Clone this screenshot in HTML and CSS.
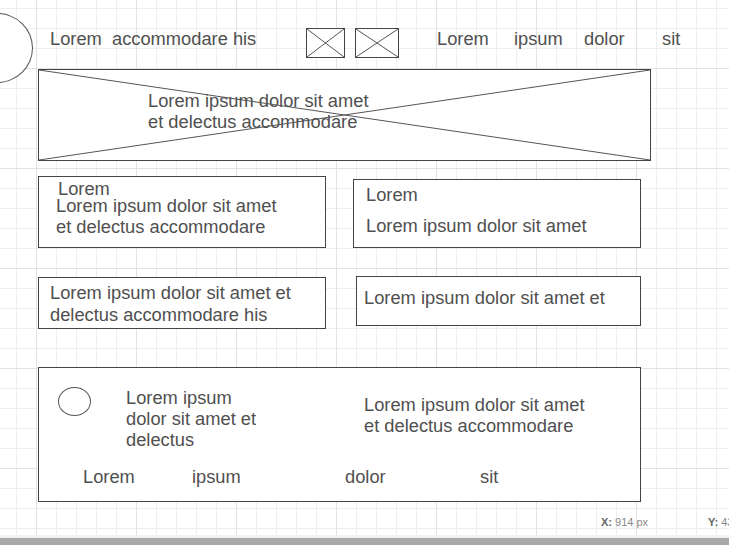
FILE: index.html
```html
<!DOCTYPE html>
<html>
<head>
  <meta charset="UTF-8">
  <title>Wireframe</title>
  <link rel="stylesheet" href="styles.css">
</head>
<body>
  <div class="canvas">
    <header class="topbar">
      <div class="blob"></div>
      <div class="title">Lorem  accommodare his</div>
      <div class="thumbs">
        <div class="thumb thumb-sm">
          <svg viewBox="0 0 100 100" preserveAspectRatio="none"><line x1="0" y1="0" x2="100" y2="100" vector-effect="non-scaling-stroke"/><line x1="0" y1="100" x2="100" y2="0" vector-effect="non-scaling-stroke"/></svg>
        </div>
        <div class="thumb thumb-lg">
          <svg viewBox="0 0 100 100" preserveAspectRatio="none"><line x1="0" y1="0" x2="100" y2="100" vector-effect="non-scaling-stroke"/><line x1="0" y1="100" x2="100" y2="0" vector-effect="non-scaling-stroke"/></svg>
        </div>
      </div>
      <nav class="menu">
        <span>Lorem</span>
        <span>ipsum</span>
        <span>dolor</span>
        <span>sit</span>
      </nav>
    </header>

    <!-- hero placeholder -->
    <section class="hero">
      <p class="hero-text">Lorem ipsum dolor sit amet<br>et delectus accommodare</p>
      <svg class="cross" viewBox="0 0 100 100" preserveAspectRatio="none"><line x1="0" y1="0" x2="100" y2="100" vector-effect="non-scaling-stroke"/><line x1="0" y1="100" x2="100" y2="0" vector-effect="non-scaling-stroke"/></svg>
    </section>

    <div class="row row-a">
      <div class="card card-a">
        <h3>Lorem</h3>
        <p>Lorem ipsum dolor sit amet<br>et delectus accommodare</p>
      </div>
      <div class="card card-b">
        <h3>Lorem</h3>
        <p>Lorem ipsum dolor sit amet</p>
      </div>
    </div>

    <div class="row row-b">
      <div class="card card-c">
        <p>Lorem ipsum dolor sit amet et<br>delectus accommodare his</p>
      </div>
      <div class="card card-d">
        <p>Lorem ipsum dolor sit amet et</p>
      </div>
    </div>

    <section class="panel">
      <div class="panel-top">
        <div class="avatar"></div>
        <p class="panel-lead">Lorem ipsum<br>dolor sit amet et<br>delectus</p>
        <p class="panel-body">Lorem ipsum dolor sit amet<br>et delectus accommodare</p>
      </div>
      <div class="panel-links">
        <span>Lorem</span>
        <span>ipsum</span>
        <span>dolor</span>
        <span>sit</span>
      </div>
    </section>

    <div class="coords">
      <span><b>X:</b> 914 px</span>
      <span><b>Y:</b> 436 px</span>
    </div>
  </div>
  <div class="divider"></div>
  <div class="statusbar"></div>
</body>
</html>
```

FILE: styles.css
```css
body {
  margin: 0;
  font-family: "Liberation Sans", Arial, sans-serif;
  color: #505050;
  background-color: #fff;
}
p,
h3 {
  margin: 0;
  font-size: inherit;
  font-weight: normal;
}
.canvas {
  height: 535px;
  overflow: hidden;
  font-size: 18.3px;
  line-height: 21px;
  background-color: #fff;
  background-image:
    linear-gradient(to right, #e2e2e2 1px, transparent 1px),
    linear-gradient(to bottom, #e2e2e2 1px, transparent 1px),
    linear-gradient(to right, #eeeeee 1px, transparent 1px),
    linear-gradient(to bottom, #eeeeee 1px, transparent 1px);
  background-size: 100px 100px, 100px 100px, 20px 20px, 20px 20px;
  background-position: 36px 0, 0 68px, 16px 0, 0 8px;
}

/* top bar */
.topbar {
  display: flex;
  align-items: flex-start;
  height: 69px;
  padding-top: 13px;
  box-sizing: border-box;
}
.blob {
  flex: none;
  width: 72px;
  height: 70px;
  margin-left: -39px;
  border: 1px solid #555;
  border-radius: 50%;
  background-color: #fff;
  box-sizing: border-box;
}
.title {
  flex: none;
  width: 256px;
  margin: 15px 0 0 17px;
  white-space: pre;
}
.thumbs {
  display: flex;
  gap: 10px;
  margin-top: 15px;
}
.thumb {
  height: 30px;
  border: 1px solid #444;
  background-color: #fff;
  box-sizing: border-box;
}
.thumb-sm {
  width: 39px;
}
.thumb-lg {
  width: 44px;
}
.thumb svg,
.cross {
  display: block;
  width: 100%;
  height: 100%;
}
svg line {
  stroke: #555;
  stroke-width: 1;
}
.menu {
  display: grid;
  grid-template-columns: 77px 70px 78px auto;
  margin: 15px 0 0 38px;
}

/* hero */
.hero {
  position: relative;
  width: 613px;
  height: 92px;
  margin-left: 38px;
  padding: 20px 0 0 109px;
  border: 1px solid #444;
  background-color: #fff;
  box-sizing: border-box;
}
.cross {
  position: absolute;
  top: 0;
  left: 0;
}

/* cards */
.row {
  display: flex;
  align-items: flex-start;
}
.row-a {
  margin-top: 15px;
}
.row-b {
  margin-top: 28px;
}
.card {
  width: 288px;
  border: 1px solid #444;
  background-color: #fff;
  box-sizing: border-box;
}
.card-a {
  height: 72px;
  margin-left: 38px;
  padding-top: 1px;
}
.card-a h3 {
  padding-left: 19px;
}
.card-a p {
  margin-top: -4px;
  padding-left: 17px;
}
.card-b {
  height: 69px;
  margin: 3px 0 0 27px;
  padding: 4px 0 0 12px;
}
.card-b p {
  margin-top: 10px;
}
.card-c {
  height: 52px;
  margin: 1px 0 0 38px;
  padding: 4px 0 0 11px;
  line-height: 21.6px;
}
.card-d {
  width: 285px;
  height: 50px;
  margin-left: 30px;
  padding: 10px 0 0 7px;
}

/* bottom panel */
.panel {
  width: 603px;
  height: 135px;
  margin: 38px 0 0 38px;
  border: 1px solid #444;
  background-color: #fff;
  box-sizing: border-box;
}
.panel-top {
  display: flex;
  align-items: flex-start;
}
.avatar {
  flex: none;
  width: 33px;
  height: 29px;
  margin: 19px 0 0 19px;
  border: 1px solid #555;
  border-radius: 50%;
  box-sizing: border-box;
}
.panel-lead {
  flex: none;
  width: 238px;
  margin: 19px 0 0 35px;
  line-height: 21.2px;
}
.panel-body {
  margin-top: 26px;
}
.panel-links {
  display: grid;
  grid-template-columns: 109px 153px 135px auto;
  margin-top: 15px;
  padding-left: 44px;
}

/* cursor readout */
.coords {
  display: grid;
  grid-template-columns: 107px auto;
  margin-top: 14px;
  padding-left: 601px;
  font-size: 11px;
  line-height: 13px;
  color: #888;
  white-space: nowrap;
}
.coords b {
  color: #666;
}
.divider {
  height: 3px;
  background-color: #f2f2f2;
}
.statusbar {
  height: 7px;
  background-color: #a8a8a8;
}
```
